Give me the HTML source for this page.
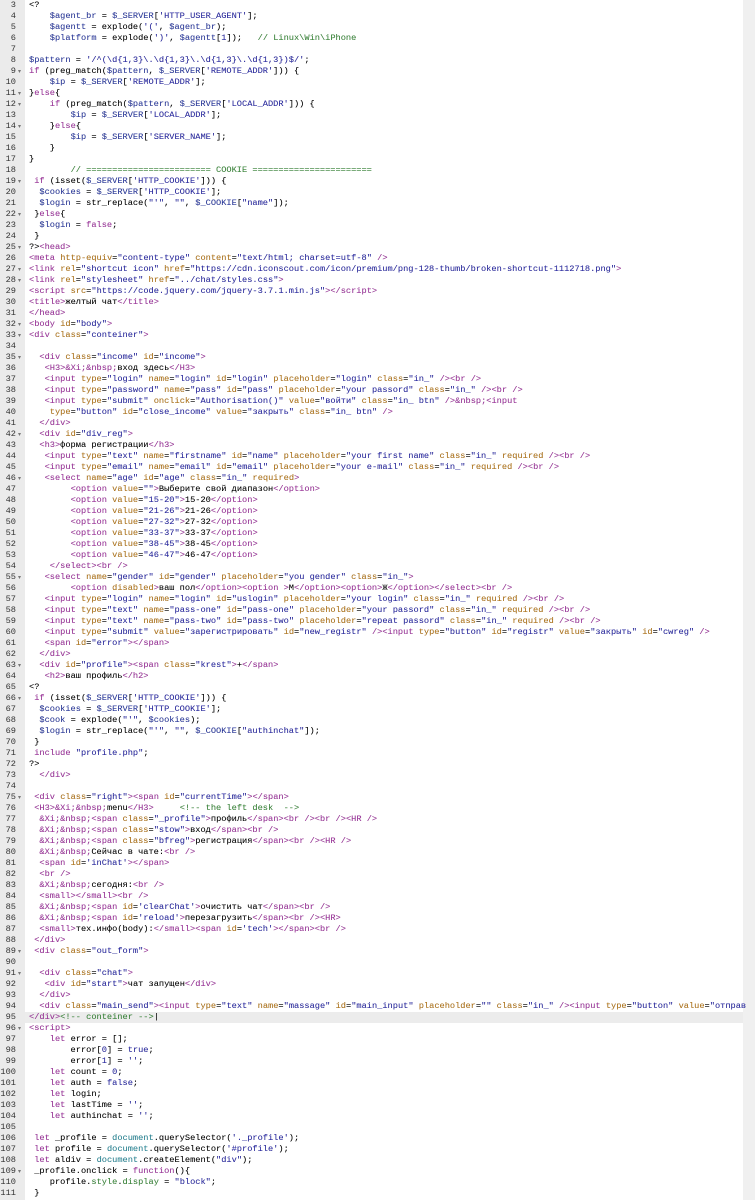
<!DOCTYPE html>
<html><head><meta charset="utf-8">
<style>
html,body{margin:0;padding:0;background:#fff;width:755px;height:1200px;overflow:hidden}
#ed{position:absolute;left:0;top:0;width:743px;height:1200px;background:#fff}
#gut{position:absolute;left:0;top:0;width:25px;height:1200px;background:#ebebeb}
#sb{position:absolute;left:743px;top:0;width:12px;height:1200px;background:#f0f0f0}
#hl{position:absolute;left:0;top:1012px;width:743px;height:11px;background:#ececec}
.ln,.cd{font-family:"Liberation Mono","DejaVu Sans Mono",monospace;font-size:8.67px;line-height:11px;white-space:pre}
.ln{position:absolute;left:0;top:0;width:16px;text-align:right;color:#333}
.f{position:absolute;left:18px;font-family:"DejaVu Sans",sans-serif;font-size:6px;line-height:11px;color:#777}
.cd{position:absolute;left:29px;top:0;color:#000;text-shadow:0 0 0.3px rgba(0,0,0,.4)}
.t{color:#a0359f}.a{color:#b5781c}.s{color:#2b2ba6}.c{color:#3c8a3c}.k{color:#a0359f}.v{color:#2b3aa0}.e{color:#a0359f}
</style></head><body>
<div id="ed"></div><div id="hl"></div><div id="gut"></div><div id="sb"></div>
<div class="ln">3
4
5
6
7
8
9
10
11
12
13
14
15
16
17
18
19
20
21
22
23
24
25
26
27
28
29
30
31
32
33
34
35
36
37
38
39
40
41
42
43
44
45
46
47
48
49
50
51
52
53
54
55
56
57
58
59
60
61
62
63
64
65
66
67
68
69
70
71
72
73
74
75
76
77
78
79
80
81
82
83
84
85
86
87
88
89
90
91
92
93
94
95
96
97
98
99
100
101
102
103
104
105
106
107
108
109
110
111</div>
<span class="f" style="top:66px">▾</span>
<span class="f" style="top:88px">▾</span>
<span class="f" style="top:99px">▾</span>
<span class="f" style="top:121px">▾</span>
<span class="f" style="top:176px">▾</span>
<span class="f" style="top:209px">▾</span>
<span class="f" style="top:242px">▾</span>
<span class="f" style="top:264px">▾</span>
<span class="f" style="top:275px">▾</span>
<span class="f" style="top:319px">▾</span>
<span class="f" style="top:330px">▾</span>
<span class="f" style="top:352px">▾</span>
<span class="f" style="top:429px">▾</span>
<span class="f" style="top:473px">▾</span>
<span class="f" style="top:572px">▾</span>
<span class="f" style="top:660px">▾</span>
<span class="f" style="top:693px">▾</span>
<span class="f" style="top:792px">▾</span>
<span class="f" style="top:946px">▾</span>
<span class="f" style="top:968px">▾</span>
<span class="f" style="top:1023px">▾</span>
<span class="f" style="top:1166px">▾</span>
<div class="cd">&lt;?
    <span class="v">$agent_br</span> = <span class="v">$_SERVER</span>[<span class="s">'HTTP_USER_AGENT'</span>];
    <span class="v">$agentt</span> = explode(<span class="s">'('</span>, <span class="v">$agent_br</span>);
    <span class="v">$platform</span> = explode(<span class="s">')'</span>, <span class="v">$agentt</span>[<span class="s">1</span>]);   <span class="c">// Linux\Win\iPhone</span>

<span class="v">$pattern</span> = <span class="s">'/^(\d{1,3}\.\d{1,3}\.\d{1,3}\.\d{1,3})$/'</span>;
<span class="k">if</span> (preg_match(<span class="v">$pattern</span>, <span class="v">$_SERVER</span>[<span class="s">'REMOTE_ADDR'</span>])) {
    <span class="v">$ip</span> = <span class="v">$_SERVER</span>[<span class="s">'REMOTE_ADDR'</span>];
}<span class="k">else</span>{
    <span class="k">if</span> (preg_match(<span class="v">$pattern</span>, <span class="v">$_SERVER</span>[<span class="s">'LOCAL_ADDR'</span>])) {
        <span class="v">$ip</span> = <span class="v">$_SERVER</span>[<span class="s">'LOCAL_ADDR'</span>];
    }<span class="k">else</span>{
        <span class="v">$ip</span> = <span class="v">$_SERVER</span>[<span class="s">'SERVER_NAME'</span>];
    }
}
        <span class="c">// ======================== COOKIE =======================</span>
 <span class="k">if</span> (isset(<span class="v">$_SERVER</span>[<span class="s">'HTTP_COOKIE'</span>])) {
  <span class="v">$cookies</span> = <span class="v">$_SERVER</span>[<span class="s">'HTTP_COOKIE'</span>];
  <span class="v">$login</span> = str_replace(<span class="s">"'"</span>, <span class="s">""</span>, <span class="v">$_COOKIE</span>[<span class="s">"name"</span>]);
 }<span class="k">else</span>{
  <span class="v">$login</span> = <span class="k">false</span>;
 }
?&gt;<span class="t">&lt;head&gt;</span>
<span class="t">&lt;meta</span> <span class="a">http-equiv</span>=<span class="s">"content-type"</span> <span class="a">content</span>=<span class="s">"text/html; charset=utf-8"</span> <span class="t">/&gt;</span>
<span class="t">&lt;link</span> <span class="a">rel</span>=<span class="s">"shortcut icon"</span> <span class="a">href</span>=<span class="s">"https://cdn.iconscout.com/icon/premium/png-128-thumb/broken-shortcut-1112718.png"</span><span class="t">&gt;</span>
<span class="t">&lt;link</span> <span class="a">rel</span>=<span class="s">"stylesheet"</span> <span class="a">href</span>=<span class="s">"../chat/styles.css"</span><span class="t">&gt;</span>
<span class="t">&lt;script</span> <span class="a">src</span>=<span class="s">"https://code.jquery.com/jquery-3.7.1.min.js"</span><span class="t">&gt;&lt;/script&gt;</span>
<span class="t">&lt;title&gt;</span>желтый чат<span class="t">&lt;/title&gt;</span>
<span class="t">&lt;/head&gt;</span>
<span class="t">&lt;body</span> <span class="a">id</span>=<span class="s">"body"</span><span class="t">&gt;</span>
<span class="t">&lt;div</span> <span class="a">class</span>=<span class="s">"conteiner"</span><span class="t">&gt;</span>

  <span class="t">&lt;div</span> <span class="a">class</span>=<span class="s">"income"</span> <span class="a">id</span>=<span class="s">"income"</span><span class="t">&gt;</span>
   <span class="t">&lt;H3&gt;</span><span class="e">&amp;Xi;&amp;nbsp;</span>вход здесь<span class="t">&lt;/H3&gt;</span>
   <span class="t">&lt;input</span> <span class="a">type</span>=<span class="s">"login"</span> <span class="a">name</span>=<span class="s">"login"</span> <span class="a">id</span>=<span class="s">"login"</span> <span class="a">placeholder</span>=<span class="s">"login"</span> <span class="a">class</span>=<span class="s">"in_"</span> <span class="t">/&gt;&lt;br /&gt;</span>
   <span class="t">&lt;input</span> <span class="a">type</span>=<span class="s">"password"</span> <span class="a">name</span>=<span class="s">"pass"</span> <span class="a">id</span>=<span class="s">"pass"</span> <span class="a">placeholder</span>=<span class="s">"your passord"</span> <span class="a">class</span>=<span class="s">"in_"</span> <span class="t">/&gt;&lt;br /&gt;</span>
   <span class="t">&lt;input</span> <span class="a">type</span>=<span class="s">"submit"</span> <span class="a">onclick</span>=<span class="s">"Authorisation()"</span> <span class="a">value</span>=<span class="s">"войти"</span> <span class="a">class</span>=<span class="s">"in_ btn"</span> <span class="t">/&gt;</span><span class="e">&amp;nbsp;</span><span class="t">&lt;input</span>
    <span class="a">type</span>=<span class="s">"button"</span> <span class="a">id</span>=<span class="s">"close_income"</span> <span class="a">value</span>=<span class="s">"закрыть"</span> <span class="a">class</span>=<span class="s">"in_ btn"</span> <span class="t">/&gt;</span>
  <span class="t">&lt;/div&gt;</span>
  <span class="t">&lt;div</span> <span class="a">id</span>=<span class="s">"div_reg"</span><span class="t">&gt;</span>
  <span class="t">&lt;h3&gt;</span>форма регистрации<span class="t">&lt;/h3&gt;</span>
   <span class="t">&lt;input</span> <span class="a">type</span>=<span class="s">"text"</span> <span class="a">name</span>=<span class="s">"firstname"</span> <span class="a">id</span>=<span class="s">"name"</span> <span class="a">placeholder</span>=<span class="s">"your first name"</span> <span class="a">class</span>=<span class="s">"in_"</span> <span class="a">required</span> <span class="t">/&gt;&lt;br /&gt;</span>
   <span class="t">&lt;input</span> <span class="a">type</span>=<span class="s">"email"</span> <span class="a">name</span>=<span class="s">"email"</span> <span class="a">id</span>=<span class="s">"email"</span> <span class="a">placeholder</span>=<span class="s">"your e-mail"</span> <span class="a">class</span>=<span class="s">"in_"</span> <span class="a">required</span> <span class="t">/&gt;&lt;br /&gt;</span>
   <span class="t">&lt;select</span> <span class="a">name</span>=<span class="s">"age"</span> <span class="a">id</span>=<span class="s">"age"</span> <span class="a">class</span>=<span class="s">"in_"</span> <span class="a">required</span><span class="t">&gt;</span>
        <span class="t">&lt;option</span> <span class="a">value</span>=<span class="s">""</span><span class="t">&gt;</span>Выберите свой диапазон<span class="t">&lt;/option&gt;</span>
        <span class="t">&lt;option</span> <span class="a">value</span>=<span class="s">"15-20"</span><span class="t">&gt;</span>15-20<span class="t">&lt;/option&gt;</span>
        <span class="t">&lt;option</span> <span class="a">value</span>=<span class="s">"21-26"</span><span class="t">&gt;</span>21-26<span class="t">&lt;/option&gt;</span>
        <span class="t">&lt;option</span> <span class="a">value</span>=<span class="s">"27-32"</span><span class="t">&gt;</span>27-32<span class="t">&lt;/option&gt;</span>
        <span class="t">&lt;option</span> <span class="a">value</span>=<span class="s">"33-37"</span><span class="t">&gt;</span>33-37<span class="t">&lt;/option&gt;</span>
        <span class="t">&lt;option</span> <span class="a">value</span>=<span class="s">"38-45"</span><span class="t">&gt;</span>38-45<span class="t">&lt;/option&gt;</span>
        <span class="t">&lt;option</span> <span class="a">value</span>=<span class="s">"46-47"</span><span class="t">&gt;</span>46-47<span class="t">&lt;/option&gt;</span>
    <span class="t">&lt;/select&gt;&lt;br /&gt;</span>
   <span class="t">&lt;select</span> <span class="a">name</span>=<span class="s">"gender"</span> <span class="a">id</span>=<span class="s">"gender"</span> <span class="a">placeholder</span>=<span class="s">"you gender"</span> <span class="a">class</span>=<span class="s">"in_"</span><span class="t">&gt;</span>
        <span class="t">&lt;option</span> <span class="a">disabled</span><span class="t">&gt;</span>ваш пол<span class="t">&lt;/option&gt;&lt;option &gt;</span>М<span class="t">&lt;/option&gt;&lt;option&gt;</span>Ж<span class="t">&lt;/option&gt;&lt;/select&gt;&lt;br /&gt;</span>
   <span class="t">&lt;input</span> <span class="a">type</span>=<span class="s">"login"</span> <span class="a">name</span>=<span class="s">"login"</span> <span class="a">id</span>=<span class="s">"uslogin"</span> <span class="a">placeholder</span>=<span class="s">"your login"</span> <span class="a">class</span>=<span class="s">"in_"</span> <span class="a">required</span> <span class="t">/&gt;&lt;br /&gt;</span>
   <span class="t">&lt;input</span> <span class="a">type</span>=<span class="s">"text"</span> <span class="a">name</span>=<span class="s">"pass-one"</span> <span class="a">id</span>=<span class="s">"pass-one"</span> <span class="a">placeholder</span>=<span class="s">"your passord"</span> <span class="a">class</span>=<span class="s">"in_"</span> <span class="a">required</span> <span class="t">/&gt;&lt;br /&gt;</span>
   <span class="t">&lt;input</span> <span class="a">type</span>=<span class="s">"text"</span> <span class="a">name</span>=<span class="s">"pass-two"</span> <span class="a">id</span>=<span class="s">"pass-two"</span> <span class="a">placeholder</span>=<span class="s">"repeat passord"</span> <span class="a">class</span>=<span class="s">"in_"</span> <span class="a">required</span> <span class="t">/&gt;&lt;br /&gt;</span>
   <span class="t">&lt;input</span> <span class="a">type</span>=<span class="s">"submit"</span> <span class="a">value</span>=<span class="s">"зарегистрировать"</span> <span class="a">id</span>=<span class="s">"new_registr"</span> <span class="t">/&gt;&lt;input</span> <span class="a">type</span>=<span class="s">"button"</span> <span class="a">id</span>=<span class="s">"registr"</span> <span class="a">value</span>=<span class="s">"закрыть"</span> <span class="a">id</span>=<span class="s">"cwreg"</span> <span class="t">/&gt;</span>
   <span class="t">&lt;span</span> <span class="a">id</span>=<span class="s">"error"</span><span class="t">&gt;&lt;/span&gt;</span>
  <span class="t">&lt;/div&gt;</span>
  <span class="t">&lt;div</span> <span class="a">id</span>=<span class="s">"profile"</span><span class="t">&gt;&lt;span</span> <span class="a">class</span>=<span class="s">"krest"</span><span class="t">&gt;</span>+<span class="t">&lt;/span&gt;</span>
   <span class="t">&lt;h2&gt;</span>ваш профиль<span class="t">&lt;/h2&gt;</span>
&lt;?
 <span class="k">if</span> (isset(<span class="v">$_SERVER</span>[<span class="s">'HTTP_COOKIE'</span>])) {
  <span class="v">$cookies</span> = <span class="v">$_SERVER</span>[<span class="s">'HTTP_COOKIE'</span>];
  <span class="v">$cook</span> = explode(<span class="s">"'"</span>, <span class="v">$cookies</span>);
  <span class="v">$login</span> = str_replace(<span class="s">"'"</span>, <span class="s">""</span>, <span class="v">$_COOKIE</span>[<span class="s">"authinchat"</span>]);
 }
 <span class="k">include</span> <span class="s">"profile.php"</span>;
?&gt;
  <span class="t">&lt;/div&gt;</span>

 <span class="t">&lt;div</span> <span class="a">class</span>=<span class="s">"right"</span><span class="t">&gt;&lt;span</span> <span class="a">id</span>=<span class="s">"currentTime"</span><span class="t">&gt;&lt;/span&gt;</span>
 <span class="t">&lt;H3&gt;</span><span class="e">&amp;Xi;&amp;nbsp;</span>menu<span class="t">&lt;/H3&gt;</span>     <span class="c">&lt;!-- the left desk  --&gt;</span>
  <span class="e">&amp;Xi;&amp;nbsp;</span><span class="t">&lt;span</span> <span class="a">class</span>=<span class="s">"_profile"</span><span class="t">&gt;</span>профиль<span class="t">&lt;/span&gt;&lt;br /&gt;&lt;br /&gt;&lt;HR /&gt;</span>
  <span class="e">&amp;Xi;&amp;nbsp;</span><span class="t">&lt;span</span> <span class="a">class</span>=<span class="s">"stow"</span><span class="t">&gt;</span>вход<span class="t">&lt;/span&gt;&lt;br /&gt;</span>
  <span class="e">&amp;Xi;&amp;nbsp;</span><span class="t">&lt;span</span> <span class="a">class</span>=<span class="s">"bfreg"</span><span class="t">&gt;</span>регистрация<span class="t">&lt;/span&gt;&lt;br /&gt;&lt;HR /&gt;</span>
  <span class="e">&amp;Xi;&amp;nbsp;</span>Сейчас в чате:<span class="t">&lt;br /&gt;</span>
  <span class="t">&lt;span</span> <span class="a">id</span>=<span class="s">'inChat'</span><span class="t">&gt;&lt;/span&gt;</span>
  <span class="t">&lt;br /&gt;</span>
  <span class="e">&amp;Xi;&amp;nbsp;</span>сегодня:<span class="t">&lt;br /&gt;</span>
  <span class="t">&lt;small&gt;&lt;/small&gt;&lt;br /&gt;</span>
  <span class="e">&amp;Xi;&amp;nbsp;</span><span class="t">&lt;span</span> <span class="a">id</span>=<span class="s">'clearChat'</span><span class="t">&gt;</span>очистить чат<span class="t">&lt;/span&gt;&lt;br /&gt;</span>
  <span class="e">&amp;Xi;&amp;nbsp;</span><span class="t">&lt;span</span> <span class="a">id</span>=<span class="s">'reload'</span><span class="t">&gt;</span>перезагрузить<span class="t">&lt;/span&gt;&lt;br /&gt;&lt;HR&gt;</span>
  <span class="t">&lt;small&gt;</span>тех.инфо(body):<span class="t">&lt;/small&gt;&lt;span</span> <span class="a">id</span>=<span class="s">'tech'</span><span class="t">&gt;&lt;/span&gt;&lt;br /&gt;</span>
 <span class="t">&lt;/div&gt;</span>
 <span class="t">&lt;div</span> <span class="a">class</span>=<span class="s">"out_form"</span><span class="t">&gt;</span>

  <span class="t">&lt;div</span> <span class="a">class</span>=<span class="s">"chat"</span><span class="t">&gt;</span>
   <span class="t">&lt;div</span> <span class="a">id</span>=<span class="s">"start"</span><span class="t">&gt;</span>чат запущен<span class="t">&lt;/div&gt;</span>
  <span class="t">&lt;/div&gt;</span>
  <span class="t">&lt;div</span> <span class="a">class</span>=<span class="s">"main_send"</span><span class="t">&gt;&lt;input</span> <span class="a">type</span>=<span class="s">"text"</span> <span class="a">name</span>=<span class="s">"massage"</span> <span class="a">id</span>=<span class="s">"main_input"</span> <span class="a">placeholder</span>=<span class="s">""</span> <span class="a">class</span>=<span class="s">"in_"</span> <span class="t">/&gt;&lt;input</span> <span class="a">type</span>=<span class="s">"button"</span> <span class="a">value</span>=<span class="s">"отправ</span>
<span class="t">&lt;/div&gt;</span><span class="c">&lt;!-- conteiner --&gt;</span>|
<span class="t">&lt;script&gt;</span>
    <span class="k">let</span> error = [];
        error[<span class="s">0</span>] = <span class="s">true</span>;
        error[<span class="s">1</span>] = <span class="s">''</span>;
    <span class="k">let</span> count = <span class="s">0</span>;
    <span class="k">let</span> auth = <span class="s">false</span>;
    <span class="k">let</span> login;
    <span class="k">let</span> lastTime = <span class="s">''</span>;
    <span class="k">let</span> authinchat = <span class="s">''</span>;

 <span class="k">let</span> _profile = <span style="color:#2b8a9a">document</span>.querySelector(<span class="s">'._profile'</span>);
 <span class="k">let</span> profile = <span style="color:#2b8a9a">document</span>.querySelector(<span class="s">'#profile'</span>);
 <span class="k">let</span> aldiv = <span style="color:#2b8a9a">document</span>.createElement(<span class="s">"div"</span>);
 _profile.onclick = <span class="k">function</span>(){
    profile.<span class="c">style</span>.<span class="c">display</span> = <span class="s">"block"</span>;
 }</div>
</body></html>
